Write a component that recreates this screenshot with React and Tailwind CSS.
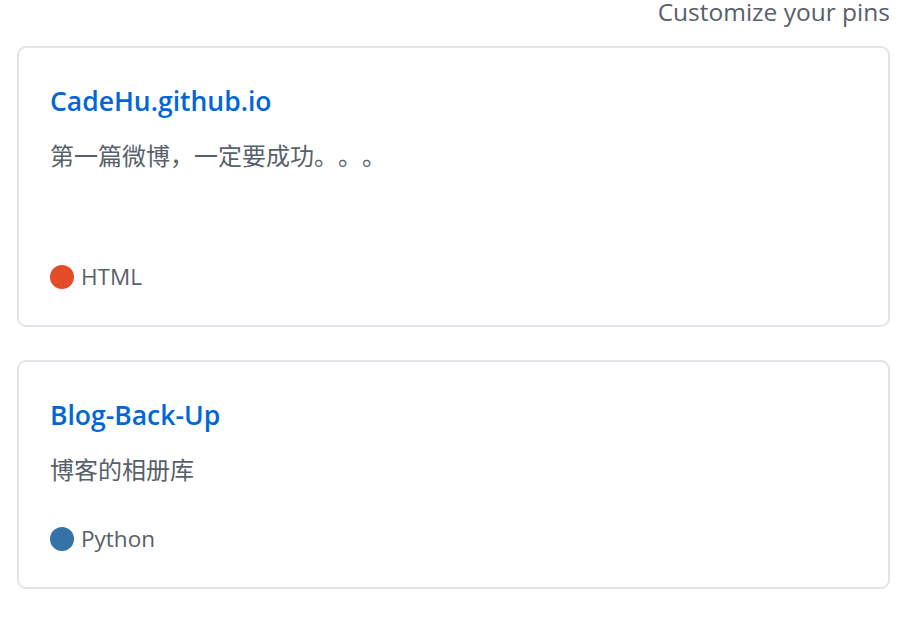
import React from "react";

const pins = [
  {
    name: "CadeHu.github.io",
    desc: "第一篇微博，一定要成功。。。",
    lang: "HTML",
    color: "bg-[#e34c26]",
    height: "h-[281px]",
  },
  {
    name: "Blog-Back-Up",
    desc: "博客的相册库",
    lang: "Python",
    color: "bg-[#3572a5]",
    height: "h-[229px]",
  },
];

function PinCard({ pin }) {
  return (
    <div
      className={`flex flex-col rounded-[9px] border-2 border-[#e1e4e8] bg-white pl-[31px] pr-6 pt-[37px] pb-[32px] ${pin.height}`}
    >
      <a href="#" className="text-[26.5px] font-semibold leading-[32px] text-[#0366d6]">
        {pin.name}
      </a>
      <p className="mt-[23px] text-[24px] leading-[32px] text-[#586069] [text-spacing-trim:space-all]">
        {pin.desc}
      </p>
      <div className="mt-auto flex items-center gap-[7px] text-[22.5px] leading-[32px] text-[#586069]">
        <span className={`h-6 w-6 rounded-full ${pin.color}`} />
        <span>{pin.lang}</span>
      </div>
    </div>
  );
}

export default function App() {
  return (
    <div
      className="min-h-screen bg-white pl-[17px] pr-[31px]"
      style={{ fontFamily: '"Open Sans", "Noto Sans CJK SC", sans-serif' }}
    >
      <div className="flex justify-end">
        <span className="text-[24.5px] leading-[24px] text-[#586069]">Customize your pins</span>
      </div>
      <div className="mt-[22px] flex flex-col gap-[33px]">
        {pins.map((p) => (
          <PinCard key={p.name} pin={p} />
        ))}
      </div>
    </div>
  );
}
